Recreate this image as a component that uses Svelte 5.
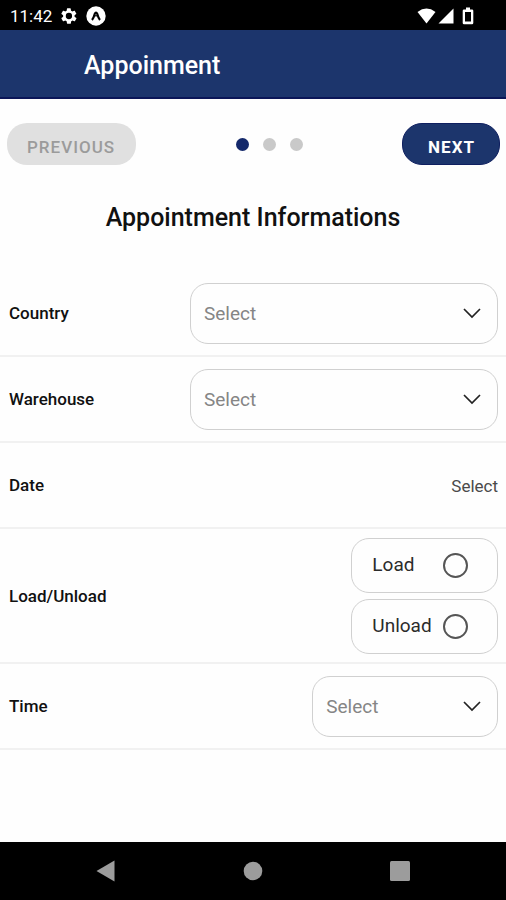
<script>
  const steps = [1, 2, 3];
  let step = $state(1);
  let country = $state('');
  let warehouse = $state('');
  let time = $state('');
  let operation = $state('');
</script>

{#snippet chevron()}
  <svg class="chevron" viewBox="0 0 18 12" aria-hidden="true">
    <path d="M1 2 L9 10 L17 2" fill="none" stroke="#222" stroke-width="1.7" />
  </svg>
{/snippet}

<div class="screen">
  <div class="status">
    <div class="group">
      <span class="clock">11:42</span>
      <svg width="18" height="18" viewBox="0 0 24 24" aria-hidden="true">
        <path fill="#fff" fill-rule="evenodd" d="M19.4 13a7.5 7.5 0 0 0 0-2l2.2-1.700a.5.5 0 0 0 .1-.6l-2.100-3.600a.5.5 0 0 0-.6-.2l-2.600 1a7.600 7.600 0 0 0-1.700-1l-.4-2.700a.5.5 0 0 0-.5-.4H9.800a.5.5 0 0 0-.5.4l-.4 2.700a7.600 7.600 0 0 0-1.700 1l-2.600-1a.5.5 0 0 0-.6.2L1.900 8.700a.5.5 0 0 0 .1.6L4.200 11a7.500 7.500 0 0 0 0 2L2 14.700a.5.5 0 0 0-.1.6L4 18.900a.5.5 0 0 0 .6.2l2.600-1a7.600 7.600 0 0 0 1.700 1l.4 2.700a.5.5 0 0 0 .5.4H14a.5.5 0 0 0 .5-.4l.4-2.700a7.600 7.600 0 0 0 1.700-1l2.600 1a.5.5 0 0 0 .6-.2l2.100-3.600a.5.5 0 0 0-.1-.6zM11.900 16.200a4.200 4.200 0 1 1 0-8.400a4.200 4.200 0 0 1 0 8.400z" />
      </svg>
      <svg width="20" height="20" viewBox="0 0 20 20" aria-hidden="true">
        <circle cx="10" cy="10" r="9.700" fill="#fff" />
        <path d="M6 14 Q7.500 12.500 8.700 8 Q10 5.200 11.300 8 Q12.500 12.500 14 14" fill="none" stroke="#000" stroke-width="2.200" />
        <path d="M8.800 9.800h2.400" stroke="#000" stroke-width="1.200" />
      </svg>
    </div>
    <div class="group icons">
      <svg width="19" height="16" viewBox="0 0 19 16" aria-hidden="true">
        <path fill="#fff" d="M0.500 4 Q9.500 -2.800 18.500 4 L9.500 15.500z" />
      </svg>
      <svg width="16" height="16" viewBox="0 0 16 16" aria-hidden="true">
        <path fill="#fff" d="M15.500 0.500V15.500H0.500z" />
      </svg>
      <svg class="battery" width="12" height="18" viewBox="0 0 12 18" aria-hidden="true">
        <path fill="#fff" fill-rule="evenodd" d="M4 0.500h4v2h2q1.300 0 1.300 1.300v12.200q0 1.300-1.300 1.300H2q-1.300 0-1.300-1.300V3.800Q0.700 2.500 2 2.500h2zM3 5v9.500h6V5z" />
      </svg>
    </div>
  </div>

  <header><h1>Appoinment</h1></header>

  <main>
    <div class="stepper">
      <button class="pill" type="button" disabled={step === 1} onclick={() => step--}>PREVIOUS</button>
      <div class="dots">
        {#each steps as s}
          <span class="dot" class:active={s === step}></span>
        {/each}
      </div>
      <button class="pill next" type="button" disabled={step === 3} onclick={() => step++}>NEXT</button>
    </div>

    <h2>Appointment Informations</h2>

    <form>
      <div class="row">
        <label for="country">Country</label>
        <div class="select">
          <select id="country" bind:value={country}><option value="">Select</option></select>
          {@render chevron()}
        </div>
      </div>
      <div class="row">
        <label for="warehouse">Warehouse</label>
        <div class="select">
          <select id="warehouse" bind:value={warehouse}><option value="">Select</option></select>
          {@render chevron()}
        </div>
      </div>
      <div class="row">
        <label for="date">Date</label>
        <button id="date" class="date" type="button">Select</button>
      </div>
      <div class="row tall" role="radiogroup" aria-labelledby="operation">
        <span id="operation" class="name">Load/Unload</span>
        <div class="options">
          {#each ['Load', 'Unload'] as option}
            <label class="option">
              <span>{option}</span>
              <input type="radio" name="operation" value={option} bind:group={operation} />
            </label>
          {/each}
        </div>
      </div>
      <div class="row">
        <label for="time">Time</label>
        <div class="select short">
          <select id="time" bind:value={time}><option value="">Select</option></select>
          {@render chevron()}
        </div>
      </div>
    </form>
  </main>

  <nav>
    <button type="button" aria-label="Back">
      <svg width="20" height="22" viewBox="0 0 20 22"><path fill="#9c9c9c" d="M18.500 0.500v21L0.500 11z" /></svg>
    </button>
    <button type="button" aria-label="Home">
      <svg width="20" height="20" viewBox="0 0 20 20"><circle cx="10" cy="10" r="9.300" fill="#9c9c9c" /></svg>
    </button>
    <button type="button" aria-label="Recent apps">
      <svg width="20" height="20" viewBox="0 0 20 20"><rect width="20" height="20" rx="1.500" fill="#9c9c9c" /></svg>
    </button>
  </nav>
</div>

<style>
  :global(body) { margin: 0; }
  .screen {
    min-height: 100vh;
    display: flex;
    flex-direction: column;
    background: #fefefe;
    color: #111;
    font-family: Roboto, "Liberation Sans", sans-serif;
  }
  .screen * { box-sizing: border-box; }
  svg { display: block; }
  button, select { font-family: inherit; }

  .status {
    height: 30px;
    padding: 2px 32px 0 10px;
    display: flex;
    align-items: center;
    justify-content: space-between;
    background: #000;
    color: #fff;
  }
  .group { display: flex; align-items: center; gap: 8px; }
  .icons { gap: 2px; }
  .battery { margin-left: 6px; }
  .clock { font-size: 17px; line-height: 24px; }

  header {
    height: 69px;
    padding: 5px 84px 0;
    display: flex;
    align-items: center;
    background: #1c356c;
    border-bottom: 2px solid #0b1658;
    color: #fff;
  }
  h1 { margin: 0; font-size: 25px; line-height: 32px; font-weight: 500; }

  main { flex: 1; }
  .stepper {
    padding: 24px 6px 0 7px;
    display: flex;
    align-items: center;
    justify-content: space-between;
  }
  .pill {
    height: 42px;
    padding: 6px 20px 0;
    border: 0;
    border-radius: 20px;
    background: #e0e0e0;
    color: #9b9b9b;
    font-size: 17px;
    line-height: 24px;
    font-weight: 400;
    letter-spacing: 1px;
  }
  .pill.next {
    padding: 6px 24px 0 25px;
    background: #1c356c;
    border: 1px solid #0f1f60;
    color: #fff;
    font-weight: 700;
  }
  .pill:not(.next) { padding: 6px 21px 0 20px; font-weight: 500; }
  .dots { display: flex; gap: 14px; }
  .dot { width: 13px; height: 13px; border-radius: 50%; background: #c9c9c9; }
  .dot.active { background: #14296b; }
  h2 {
    margin: 37px 0;
    text-align: center;
    font-size: 25px;
    line-height: 32px;
    font-weight: 500;
  }

  .row {
    min-height: 86px;
    padding: 0 8px 0 9px;
    display: flex;
    align-items: center;
    justify-content: space-between;
    border-bottom: 2px solid #f1f1f1;
  }
  .row.tall { min-height: 135px; }
  .row > label, .name { font-size: 17px; line-height: 24px; font-weight: 500; }
  .select { position: relative; width: 63%; }
  .select.short { width: 38%; }
  select {
    width: 100%;
    height: 61px;
    padding: 1px 44px 0 13px;
    display: block;
    appearance: none;
    border: 1px solid #d0d0d0;
    border-radius: 18px;
    background: transparent;
    color: #858585;
    font-size: 19px;
    line-height: 24px;
  }
  .chevron {
    position: absolute;
    right: 17px;
    top: 24px;
    width: 18px;
    height: 12px;
    pointer-events: none;
  }
  .date {
    padding: 1px 0 0;
    border: 0;
    background: none;
    color: #4a4a4a;
    font-size: 17px;
    line-height: 24px;
  }
  .options { width: 30%; display: flex; flex-direction: column; gap: 6px; }
  .option {
    height: 55px;
    padding: 0 29px 0 20px;
    display: flex;
    align-items: center;
    justify-content: space-between;
    border: 1px solid #d0d0d0;
    border-radius: 18px;
    color: #2b2b2b;
    font-size: 19px;
    line-height: 24px;
  }
  input {
    flex: none;
    width: 25px;
    height: 25px;
    margin: 0;
    appearance: none;
    border: 2px solid #555;
    border-radius: 50%;
  }
  input:checked { background: radial-gradient(#1c356c 45%, transparent 50%); }

  nav {
    height: 58px;
    padding: 0 33px;
    display: grid;
    grid-template-columns: repeat(3, 1fr);
    place-items: center;
    background: #000;
  }
  nav button { padding: 0; border: 0; background: none; }
</style>
